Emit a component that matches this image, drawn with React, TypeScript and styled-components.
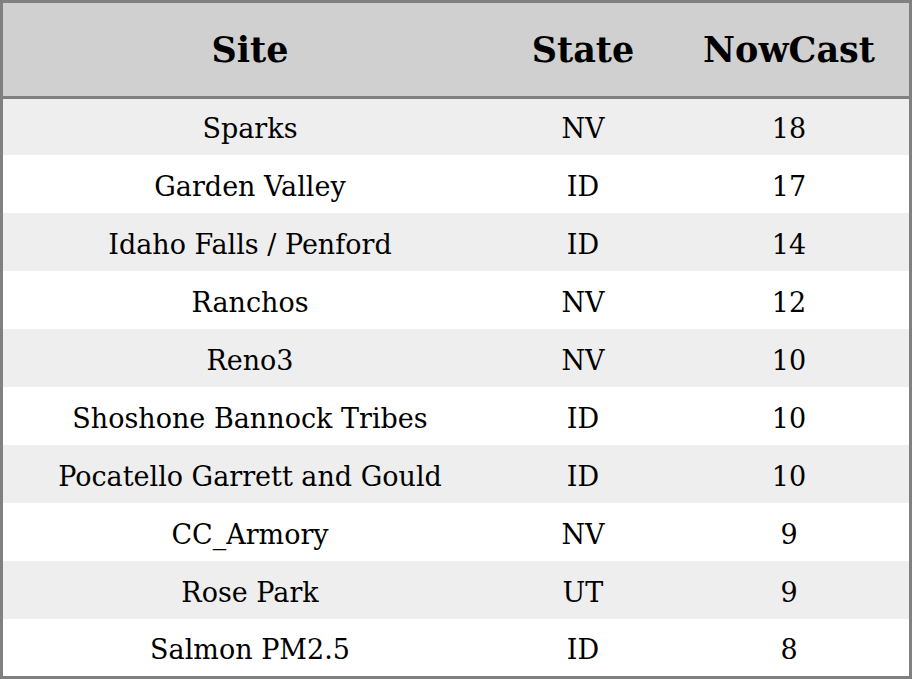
import styled, { createGlobalStyle } from "styled-components";

const rows = [
  { site: "Sparks", state: "NV", nowcast: 18 },
  { site: "Garden Valley", state: "ID", nowcast: 17 },
  { site: "Idaho Falls / Penford", state: "ID", nowcast: 14 },
  { site: "Ranchos", state: "NV", nowcast: 12 },
  { site: "Reno3", state: "NV", nowcast: 10 },
  { site: "Shoshone Bannock Tribes", state: "ID", nowcast: 10 },
  { site: "Pocatello Garrett and Gould", state: "ID", nowcast: 10 },
  { site: "CC_Armory", state: "NV", nowcast: 9 },
  { site: "Rose Park", state: "UT", nowcast: 9 },
  { site: "Salmon PM2.5", state: "ID", nowcast: 8 },
];

const GlobalStyle = createGlobalStyle`
  html, body {
    margin: 0;
    padding: 0;
    background: #ffffff;
  }
`;

const Table = styled.table`
  width: 912px;
  border-collapse: collapse;
  border: 3px solid #808080;
  box-sizing: border-box;
  font-family: "DejaVu Serif", serif;
  color: #000;
  table-layout: fixed;
`;

const HeadRow = styled.tr`
  height: 95.5px;
  background: #d0d0d0;
  border-bottom: 3px solid #808080;
`;

const HeadCell = styled.th<{ $w: number }>`
  width: ${(p) => p.$w}px;
  font-size: 35px;
  font-weight: bold;
  text-align: center;
  padding: 0;
`;

const Row = styled.tr<{ $odd: boolean }>`
  height: 58px;
  background: ${(p) => (p.$odd ? "#eeeeee" : "#ffffff")};
`;

const Cell = styled.td`
  font-size: 27px;
  text-align: center;
  padding: 4px 0 0;
`;

export default function App() {
  return (
    <>
      <GlobalStyle />
      <Table>
        <thead>
          <HeadRow>
            <HeadCell $w={494}>Site</HeadCell>
            <HeadCell $w={172}>State</HeadCell>
            <HeadCell $w={240}>NowCast</HeadCell>
          </HeadRow>
        </thead>
        <tbody>
          {rows.map((r, i) => (
            <Row key={r.site} $odd={i % 2 === 0}>
              <Cell>{r.site}</Cell>
              <Cell>{r.state}</Cell>
              <Cell>{r.nowcast}</Cell>
            </Row>
          ))}
        </tbody>
      </Table>
    </>
  );
}
